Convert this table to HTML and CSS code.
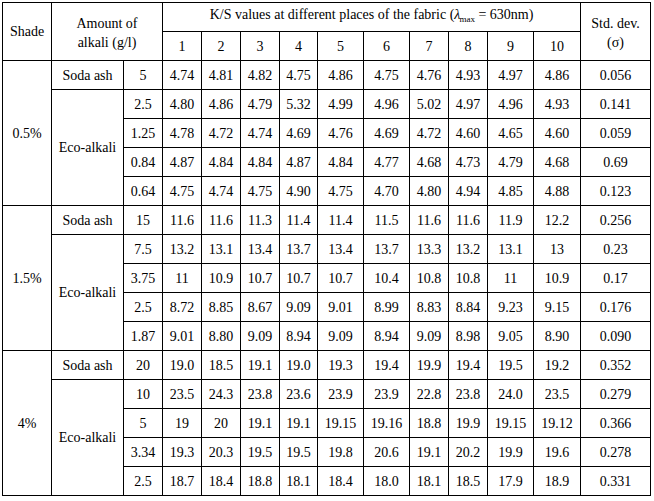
FILE: index.html
```html
<!DOCTYPE html>
<html>
<head>
<meta charset="utf-8">
<link rel="stylesheet" href="styles.css">
</head>
<body>
<table class="ks">
<colgroup>
<col class="c-shade"><col class="c-alk"><col class="c-amt">
<col class="c-39"><col class="c-39"><col class="c-39"><col class="c-38">
<col class="c-46"><col class="c-46"><col class="c-39"><col class="c-39"><col class="c-46"><col class="c-47">
<col class="c-std">
</colgroup>
<thead>
<tr>
<th rowspan="2">Shade</th>
<th rowspan="2" colspan="2" class="two">Amount of<br>alkali (g/l)</th>
<th colspan="10">K/S values at different places of the fabric (<i>λ</i><span class="sub">max</span> = 630nm)</th>
<th rowspan="2" class="two">Std. dev.<br>(σ)</th>
</tr>
<tr>
<th>1</th><th>2</th><th>3</th><th>4</th><th>5</th><th>6</th><th>7</th><th>8</th><th>9</th><th>10</th>
</tr>
</thead>
<tbody>
<tr><td rowspan="5">0.5%</td><td>Soda ash</td><td>5</td><td>4.74</td><td>4.81</td><td>4.82</td><td>4.75</td><td>4.86</td><td>4.75</td><td>4.76</td><td>4.93</td><td>4.97</td><td>4.86</td><td>0.056</td></tr>
<tr><td rowspan="4">Eco-alkali</td><td>2.5</td><td>4.80</td><td>4.86</td><td>4.79</td><td>5.32</td><td>4.99</td><td>4.96</td><td>5.02</td><td>4.97</td><td>4.96</td><td>4.93</td><td>0.141</td></tr>
<tr><td>1.25</td><td>4.78</td><td>4.72</td><td>4.74</td><td>4.69</td><td>4.76</td><td>4.69</td><td>4.72</td><td>4.60</td><td>4.65</td><td>4.60</td><td>0.059</td></tr>
<tr><td>0.84</td><td>4.87</td><td>4.84</td><td>4.84</td><td>4.87</td><td>4.84</td><td>4.77</td><td>4.68</td><td>4.73</td><td>4.79</td><td>4.68</td><td>0.69</td></tr>
<tr><td>0.64</td><td>4.75</td><td>4.74</td><td>4.75</td><td>4.90</td><td>4.75</td><td>4.70</td><td>4.80</td><td>4.94</td><td>4.85</td><td>4.88</td><td>0.123</td></tr>
<tr><td rowspan="5">1.5%</td><td>Soda ash</td><td>15</td><td>11.6</td><td>11.6</td><td>11.3</td><td>11.4</td><td>11.4</td><td>11.5</td><td>11.6</td><td>11.6</td><td>11.9</td><td>12.2</td><td>0.256</td></tr>
<tr><td rowspan="4">Eco-alkali</td><td>7.5</td><td>13.2</td><td>13.1</td><td>13.4</td><td>13.7</td><td>13.4</td><td>13.7</td><td>13.3</td><td>13.2</td><td>13.1</td><td>13</td><td>0.23</td></tr>
<tr><td>3.75</td><td>11</td><td>10.9</td><td>10.7</td><td>10.7</td><td>10.7</td><td>10.4</td><td>10.8</td><td>10.8</td><td>11</td><td>10.9</td><td>0.17</td></tr>
<tr><td>2.5</td><td>8.72</td><td>8.85</td><td>8.67</td><td>9.09</td><td>9.01</td><td>8.99</td><td>8.83</td><td>8.84</td><td>9.23</td><td>9.15</td><td>0.176</td></tr>
<tr><td>1.87</td><td>9.01</td><td>8.80</td><td>9.09</td><td>8.94</td><td>9.09</td><td>8.94</td><td>9.09</td><td>8.98</td><td>9.05</td><td>8.90</td><td>0.090</td></tr>
<tr><td rowspan="5">4%</td><td>Soda ash</td><td>20</td><td>19.0</td><td>18.5</td><td>19.1</td><td>19.0</td><td>19.3</td><td>19.4</td><td>19.9</td><td>19.4</td><td>19.5</td><td>19.2</td><td>0.352</td></tr>
<tr><td rowspan="4">Eco-alkali</td><td>10</td><td>23.5</td><td>24.3</td><td>23.8</td><td>23.6</td><td>23.9</td><td>23.9</td><td>22.8</td><td>23.8</td><td>24.0</td><td>23.5</td><td>0.279</td></tr>
<tr><td>5</td><td>19</td><td>20</td><td>19.1</td><td>19.1</td><td>19.15</td><td>19.16</td><td>18.8</td><td>19.9</td><td>19.15</td><td>19.12</td><td>0.366</td></tr>
<tr><td>3.34</td><td>19.3</td><td>20.3</td><td>19.5</td><td>19.5</td><td>19.8</td><td>20.6</td><td>19.1</td><td>20.2</td><td>19.9</td><td>19.6</td><td>0.278</td></tr>
<tr><td>2.5</td><td>18.7</td><td>18.4</td><td>18.8</td><td>18.1</td><td>18.4</td><td>18.0</td><td>18.1</td><td>18.5</td><td>17.9</td><td>18.9</td><td>0.331</td></tr>
</tbody>
</table>
</body>
</html>
```
FILE: styles.css
```css
html, body {
  background: #fff;
}
body {
  margin: 2px;
  font-family: "Liberation Serif", "Times New Roman", serif;
  font-size: 14px;
  color: #000;
}
.ks {
  border-collapse: collapse;
  table-layout: fixed;
  width: 648px;
}
.ks th, .ks td {
  border: 1px solid #000;
  padding: 0;
  height: 28px;
  text-align: center;
  vertical-align: middle;
  font-weight: normal;
  line-height: 19px;
  white-space: nowrap;
}
.ks th.two {
  padding-top: 2px;
}
.c-shade { width: 49px; }
.c-alk { width: 72px; }
.c-amt { width: 39px; }
.c-39 { width: 39px; }
.c-38 { width: 38px; }
.c-46 { width: 46px; }
.c-47 { width: 47px; }
.c-std { width: 70px; }
.sub {
  font-size: 9px;
  vertical-align: -3px;
  margin-left: -1px;
}
```
